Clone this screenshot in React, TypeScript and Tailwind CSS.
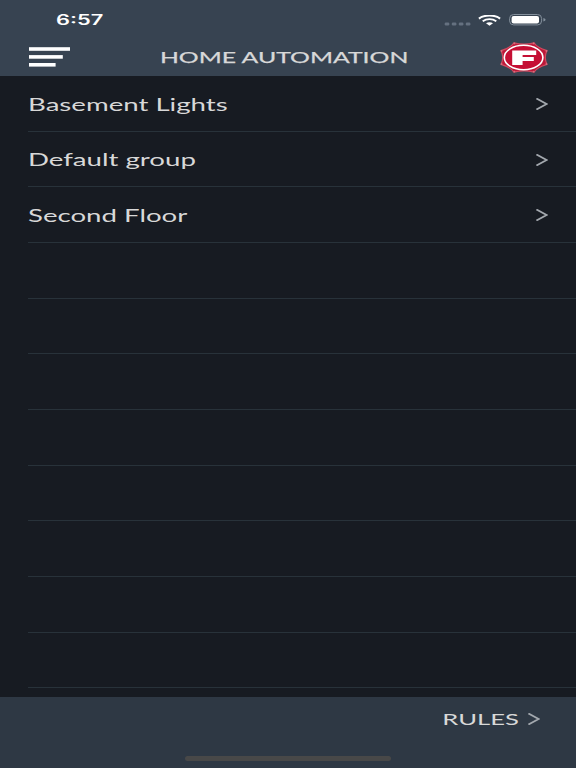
import { clsx } from "clsx";

const groups = ["Basement Lights", "Default group", "Second Floor"];
const TOTAL_ROWS = 11;

function Chevron({ className }: { className?: string }) {
  return (
    <svg
      viewBox="0 0 12 12"
      preserveAspectRatio="none"
      className={clsx("shrink-0", className)}
      fill="none"
      stroke="#a3a8ae"
      strokeWidth="1.7"
    >
      <path d="M0.4 0.4 L10.6 6 L0.4 11.6" />
    </svg>
  );
}

function MenuIcon() {
  return (
    <svg width="41" height="20" viewBox="0 0 41 20" fill="white">
      <rect x="0" y="0.2" width="41" height="3.6" />
      <rect x="0" y="8.1" width="33.8" height="3.6" />
      <rect x="0" y="16" width="26.6" height="3.6" />
    </svg>
  );
}

function Signal() {
  return (
    <svg width="27" height="4" viewBox="0 0 27 4" fill="#657180">
      <rect x="0.7" y="0.4" width="4.6" height="3" rx="1.2" />
      <rect x="7.8" y="0.4" width="4.6" height="3" rx="1.2" />
      <rect x="14.8" y="0.4" width="4.6" height="3" rx="1.2" />
      <rect x="21.8" y="0.4" width="4.6" height="3" rx="1.2" />
    </svg>
  );
}

function Wifi() {
  return (
    <svg width="23" height="11" viewBox="0 0 23 11" fill="none" stroke="white">
      <path d="M0.9 3.6 C6.5 -0.5 16.5 -0.5 22.1 3.6" strokeWidth="2" />
      <path d="M4.7 6.2 C8.5 3.4 14.5 3.4 18.3 6.2" strokeWidth="1.8" />
      <path d="M8 8.3 C10 6.8 13 6.8 15 8.3 L11.5 10.8 Z" fill="white" stroke="none" />
    </svg>
  );
}

function Battery() {
  return (
    <svg width="37" height="12" viewBox="0 0 37 12">
      <rect x="0.6" y="0.5" width="32" height="10.4" rx="4" fill="none" stroke="#84909c" strokeWidth="1" />
      <rect x="2.6" y="2.1" width="27.4" height="7.3" rx="2" fill="white" />
      <path d="M34.4 3.9 Q36.6 4.6 36.6 5.7 Q36.6 6.9 34.4 7.5 Z" fill="#84909c" />
    </svg>
  );
}

function Logo() {
  return (
    <svg width="48" height="31" viewBox="0 0 48 31">
      <path
        d="M14 0.8 Q24 3.4 34 0.8 Q37 5.6 47 8.6 Q43.6 15.5 47 22.4 Q37 25.4 34 30.2 Q24 27.6 14 30.2 Q11 25.4 1 22.4 Q4.4 15.5 1 8.6 Q11 5.6 14 0.8 Z"
        fill="#bd1738"
        stroke="#cf4a5f"
        strokeWidth="1.2"
      />
      {/* Lighter beads on the corners of the badge */}
      <g fill="#d4707f">
        <circle cx="14.4" cy="1.4" r="0.9" />
        <circle cx="33.6" cy="1.4" r="0.9" />
        <circle cx="46.4" cy="9" r="0.9" />
        <circle cx="46.4" cy="22" r="0.9" />
        <circle cx="33.6" cy="29.6" r="0.9" />
        <circle cx="14.4" cy="29.6" r="0.9" />
        <circle cx="1.6" cy="22" r="0.9" />
        <circle cx="1.6" cy="9" r="0.9" />
      </g>
      <ellipse cx="23.6" cy="15.5" rx="19.3" ry="12.3" fill="#c50f34" stroke="white" strokeWidth="1.6" />
      <path d="M12.2 8.4 H36.2 V13 H22.6 V15.1 H33.8 V18.9 H22.6 V22.9 H12.2 Z" fill="white" />
    </svg>
  );
}

export default function App() {
  return (
    <div className="flex h-[768px] w-[576px] flex-col overflow-hidden bg-[#171b22] font-['Lato',sans-serif] text-[#d8d8d8]">
      {/* Header */}
      <header className="h-[75.7px] shrink-0 bg-[#374351]">
        <div className="flex h-[38px] items-center pt-0.5 pr-[30px] pl-14 text-white">
          <span className="origin-left scale-x-[1.56] font-['Inter',sans-serif] text-[14px] leading-none font-semibold">
            6:57
          </span>
          <div className="ml-auto flex items-center">
            <div className="mt-[7px] mr-[7px]">
              <Signal />
            </div>
            <div className="mr-[8px]">
              <Wifi />
            </div>
            <Battery />
          </div>
        </div>
        <div className="flex h-[38px] items-center pr-7 pl-[29px]">
          <button className="w-12">
            <MenuIcon />
          </button>
          <h1 className="mr-[9px] flex flex-1 justify-center text-[16px] leading-none">
            <span className="scale-x-[1.55] [-webkit-text-stroke:0.25px]">HOME AUTOMATION</span>
          </h1>
          <Logo />
        </div>
      </header>

      {/* Group list, padded out with empty rows */}
      <main className="min-h-0 flex-1 pt-[0.3px]">
        {Array.from({ length: TOTAL_ROWS }, (_, i) => (
          <div
            key={i}
            className="ml-7 flex h-[55.68px] items-center justify-between border-b border-[#28323a] pt-[1.4px] pr-7"
          >
            {groups[i] && (
              <>
                <span className="origin-left scale-x-[1.625] text-[17px] leading-none">{groups[i]}</span>
                <Chevron className="h-3 w-3" />
              </>
            )}
          </div>
        ))}
      </main>

      {/* Footer */}
      <footer className="flex h-[71.5px] shrink-0 flex-col items-center justify-between bg-[#2e3844] pb-[7px]">
        <button className="flex h-[45px] w-full items-center justify-end gap-[9px] pr-9">
          <span className="origin-right scale-x-[1.6] text-[16px] leading-none">RULES</span>
          <Chevron className="h-3 w-3" />
        </button>
        <div className="h-[5px] w-[206px] rounded-full bg-[#484848]" />
      </footer>
    </div>
  );
}
